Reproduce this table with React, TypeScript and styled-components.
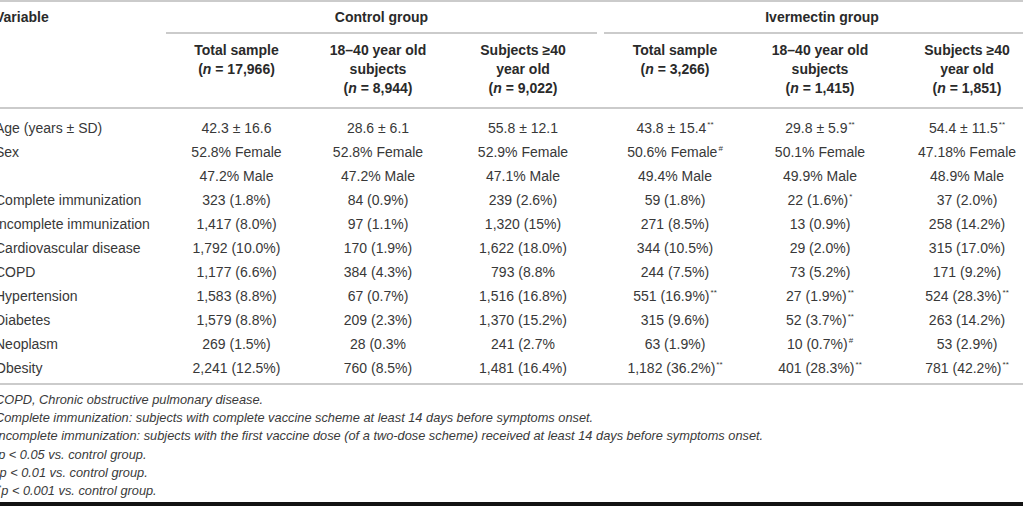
import React from 'react'
import styled, { createGlobalStyle } from 'styled-components'

const GlobalStyle = createGlobalStyle`
    html, body {
        margin: 0;
        padding: 0;
        background: #fff;
        overflow: hidden;
    }
`

// the published table is cropped a few pixels on the left
const COLUMNS = '171px 141px 142px 148px 149px 148px 146px'
const RULE = '2px solid #cbcbcb'

const Page = styled.div`
    width: 1023px;
    height: 506px;
    display: flex;
    flex-direction: column;
    overflow: hidden;
    border-top: ${RULE};
    box-sizing: border-box;
    font-family: 'Liberation Sans', Arial, Helvetica, sans-serif;
    color: #333;
`

const Sheet = styled.div`
    margin-left: -5px;
    width: 1045px;
    display: flex;
    flex-direction: column;
`

const GroupHead = styled.div`
    display: grid;
    grid-template-columns: ${COLUMNS};
    font-size: 14px;
    font-weight: bold;
    line-height: 16px;
    color: #2a2a2a;
`

const VariableLabel = styled.div`
    grid-column: 1;
    padding: 7px 0;
`

const GroupLabel = styled.div<{ $from: number; $inset?: number }>`
    grid-column: ${p => p.$from} / span 3;
    margin-left: ${p => p.$inset || 0}px;
    padding: 7px 0;
    text-align: center;
    border-bottom: ${RULE};
`

const SubHead = styled.div`
    display: grid;
    grid-template-columns: ${COLUMNS};
    padding: 7px 0 9px;
    border-bottom: ${RULE};
    font-size: 14px;
    font-weight: bold;
    line-height: 19px;
    color: #2a2a2a;
`

const Cell = styled.div<{ $inset?: boolean }>`
    text-align: center;
    padding-left: ${p => (p.$inset ? 7 : 0)}px;
    white-space: nowrap;
`

const Label = styled.div`
    white-space: nowrap;
`

const Body = styled.div`
    padding: 7px 0 3px;
    border-bottom: ${RULE};
`

const Row = styled.div`
    display: grid;
    grid-template-columns: ${COLUMNS};
    align-items: center;
    height: 24px;
    font-size: 14px;
    color: #383838;
`

const Mark = styled.sup`
    font-size: 8px;
    line-height: 0;
    vertical-align: 6px;
    margin-left: 1px;
`

const Notes = styled.div`
    padding-top: 6px;
    font-size: 12.8px;
    font-style: italic;
    line-height: 18.2px;
    color: #3a3a3a;
`

const Note = styled.div`
    white-space: nowrap;
`

const NoteMark = styled.sup`
    font-size: 8px;
    line-height: 0;
    vertical-align: 5px;
`

const BottomBar = styled.div`
    margin-top: auto;
    height: 4px;
    background: #121212;
`

type Value = string | [string, string]

const headers: string[][] = [
    ['Total sample', '17,966'],
    ['18–40 year old', 'subjects', '8,944'],
    ['Subjects ≥40', 'year old', '9,022'],
    ['Total sample', '3,266'],
    ['18–40 year old', 'subjects', '1,415'],
    ['Subjects ≥40', 'year old', '1,851'],
]

const rows: Value[][] = [
    ['Age (years ± SD)', '42.3 ± 16.6', '28.6 ± 6.1', '55.8 ± 12.1', ['43.8 ± 15.4', '**'], ['29.8 ± 5.9', '**'], ['54.4 ± 11.5', '**']],
    ['Sex', '52.8% Female', '52.8% Female', '52.9% Female', ['50.6% Female', '#'], '50.1% Female', '47.18% Female'],
    ['', '47.2% Male', '47.2% Male', '47.1% Male', '49.4% Male', '49.9% Male', '48.9% Male'],
    ['Complete immunization', '323 (1.8%)', '84 (0.9%)', '239 (2.6%)', '59 (1.8%)', ['22 (1.6%)', '*'], '37 (2.0%)'],
    ['Incomplete immunization', '1,417 (8.0%)', '97 (1.1%)', '1,320 (15%)', '271 (8.5%)', '13 (0.9%)', '258 (14.2%)'],
    ['Cardiovascular disease', '1,792 (10.0%)', '170 (1.9%)', '1,622 (18.0%)', '344 (10.5%)', '29 (2.0%)', '315 (17.0%)'],
    ['COPD', '1,177 (6.6%)', '384 (4.3%)', '793 (8.8%', '244 (7.5%)', '73 (5.2%)', '171 (9.2%)'],
    ['Hypertension', '1,583 (8.8%)', '67 (0.7%)', '1,516 (16.8%)', ['551 (16.9%)', '**'], ['27 (1.9%)', '**'], ['524 (28.3%)', '**']],
    ['Diabetes', '1,579 (8.8%)', '209 (2.3%)', '1,370 (15.2%)', '315 (9.6%)', ['52 (3.7%)', '**'], '263 (14.2%)'],
    ['Neoplasm', '269 (1.5%)', '28 (0.3%', '241 (2.7%', '63 (1.9%)', ['10 (0.7%)', '#'], '53 (2.9%)'],
    ['Obesity', '2,241 (12.5%)', '760 (8.5%)', '1,481 (16.4%)', ['1,182 (36.2%)', '**'], ['401 (28.3%)', '**'], ['781 (42.2%)', '**']],
]

const notes: [string, string][] = [
    ['', 'COPD, Chronic obstructive pulmonary disease.'],
    ['', 'Complete immunization: subjects with complete vaccine scheme at least 14 days before symptoms onset.'],
    ['', 'Incomplete immunization: subjects with the first vaccine dose (of a two-dose scheme) received at least 14 days before symptoms onset.'],
    ['*', 'p < 0.05 vs. control group.'],
    ['#', 'p < 0.01 vs. control group.'],
    ['**', 'p < 0.001 vs. control group.'],
]

const _renderValue = (v: Value) =>
    typeof v === 'string'
        ? v
        : <>{v[0]}<Mark>{v[1]}</Mark></>

const App: React.FunctionComponent = () => {
    return (
        <Page>
            <GlobalStyle />
            <Sheet>
                <GroupHead>
                    <VariableLabel>Variable</VariableLabel>
                    <GroupLabel $from={2}>Control group</GroupLabel>
                    <GroupLabel $from={5} $inset={7}>Ivermectin group</GroupLabel>
                </GroupHead>

                <SubHead>
                    <div />
                    {headers.map((lines, i) => (
                        <Cell key={i} $inset={i === 3}>
                            {lines.slice(0, -1).map(l => <div key={l}>{l}</div>)}
                            <div>(<i>n</i> = {lines[lines.length - 1]})</div>
                        </Cell>
                    ))}
                </SubHead>

                <Body>
                    {rows.map((r, i) => (
                        <Row key={i}>
                            <Label>{r[0] as string}</Label>
                            {r.slice(1).map((v, j) => (
                                <Cell key={j} $inset={j === 3}>{_renderValue(v)}</Cell>
                            ))}
                        </Row>
                    ))}
                </Body>

                <Notes>
                    {notes.map(([mark, text], i) => (
                        <Note key={i}>
                            {mark && <NoteMark>{mark}</NoteMark>}
                            {text}
                        </Note>
                    ))}
                </Notes>
            </Sheet>
            <BottomBar />
        </Page>
    )
}

export default App
